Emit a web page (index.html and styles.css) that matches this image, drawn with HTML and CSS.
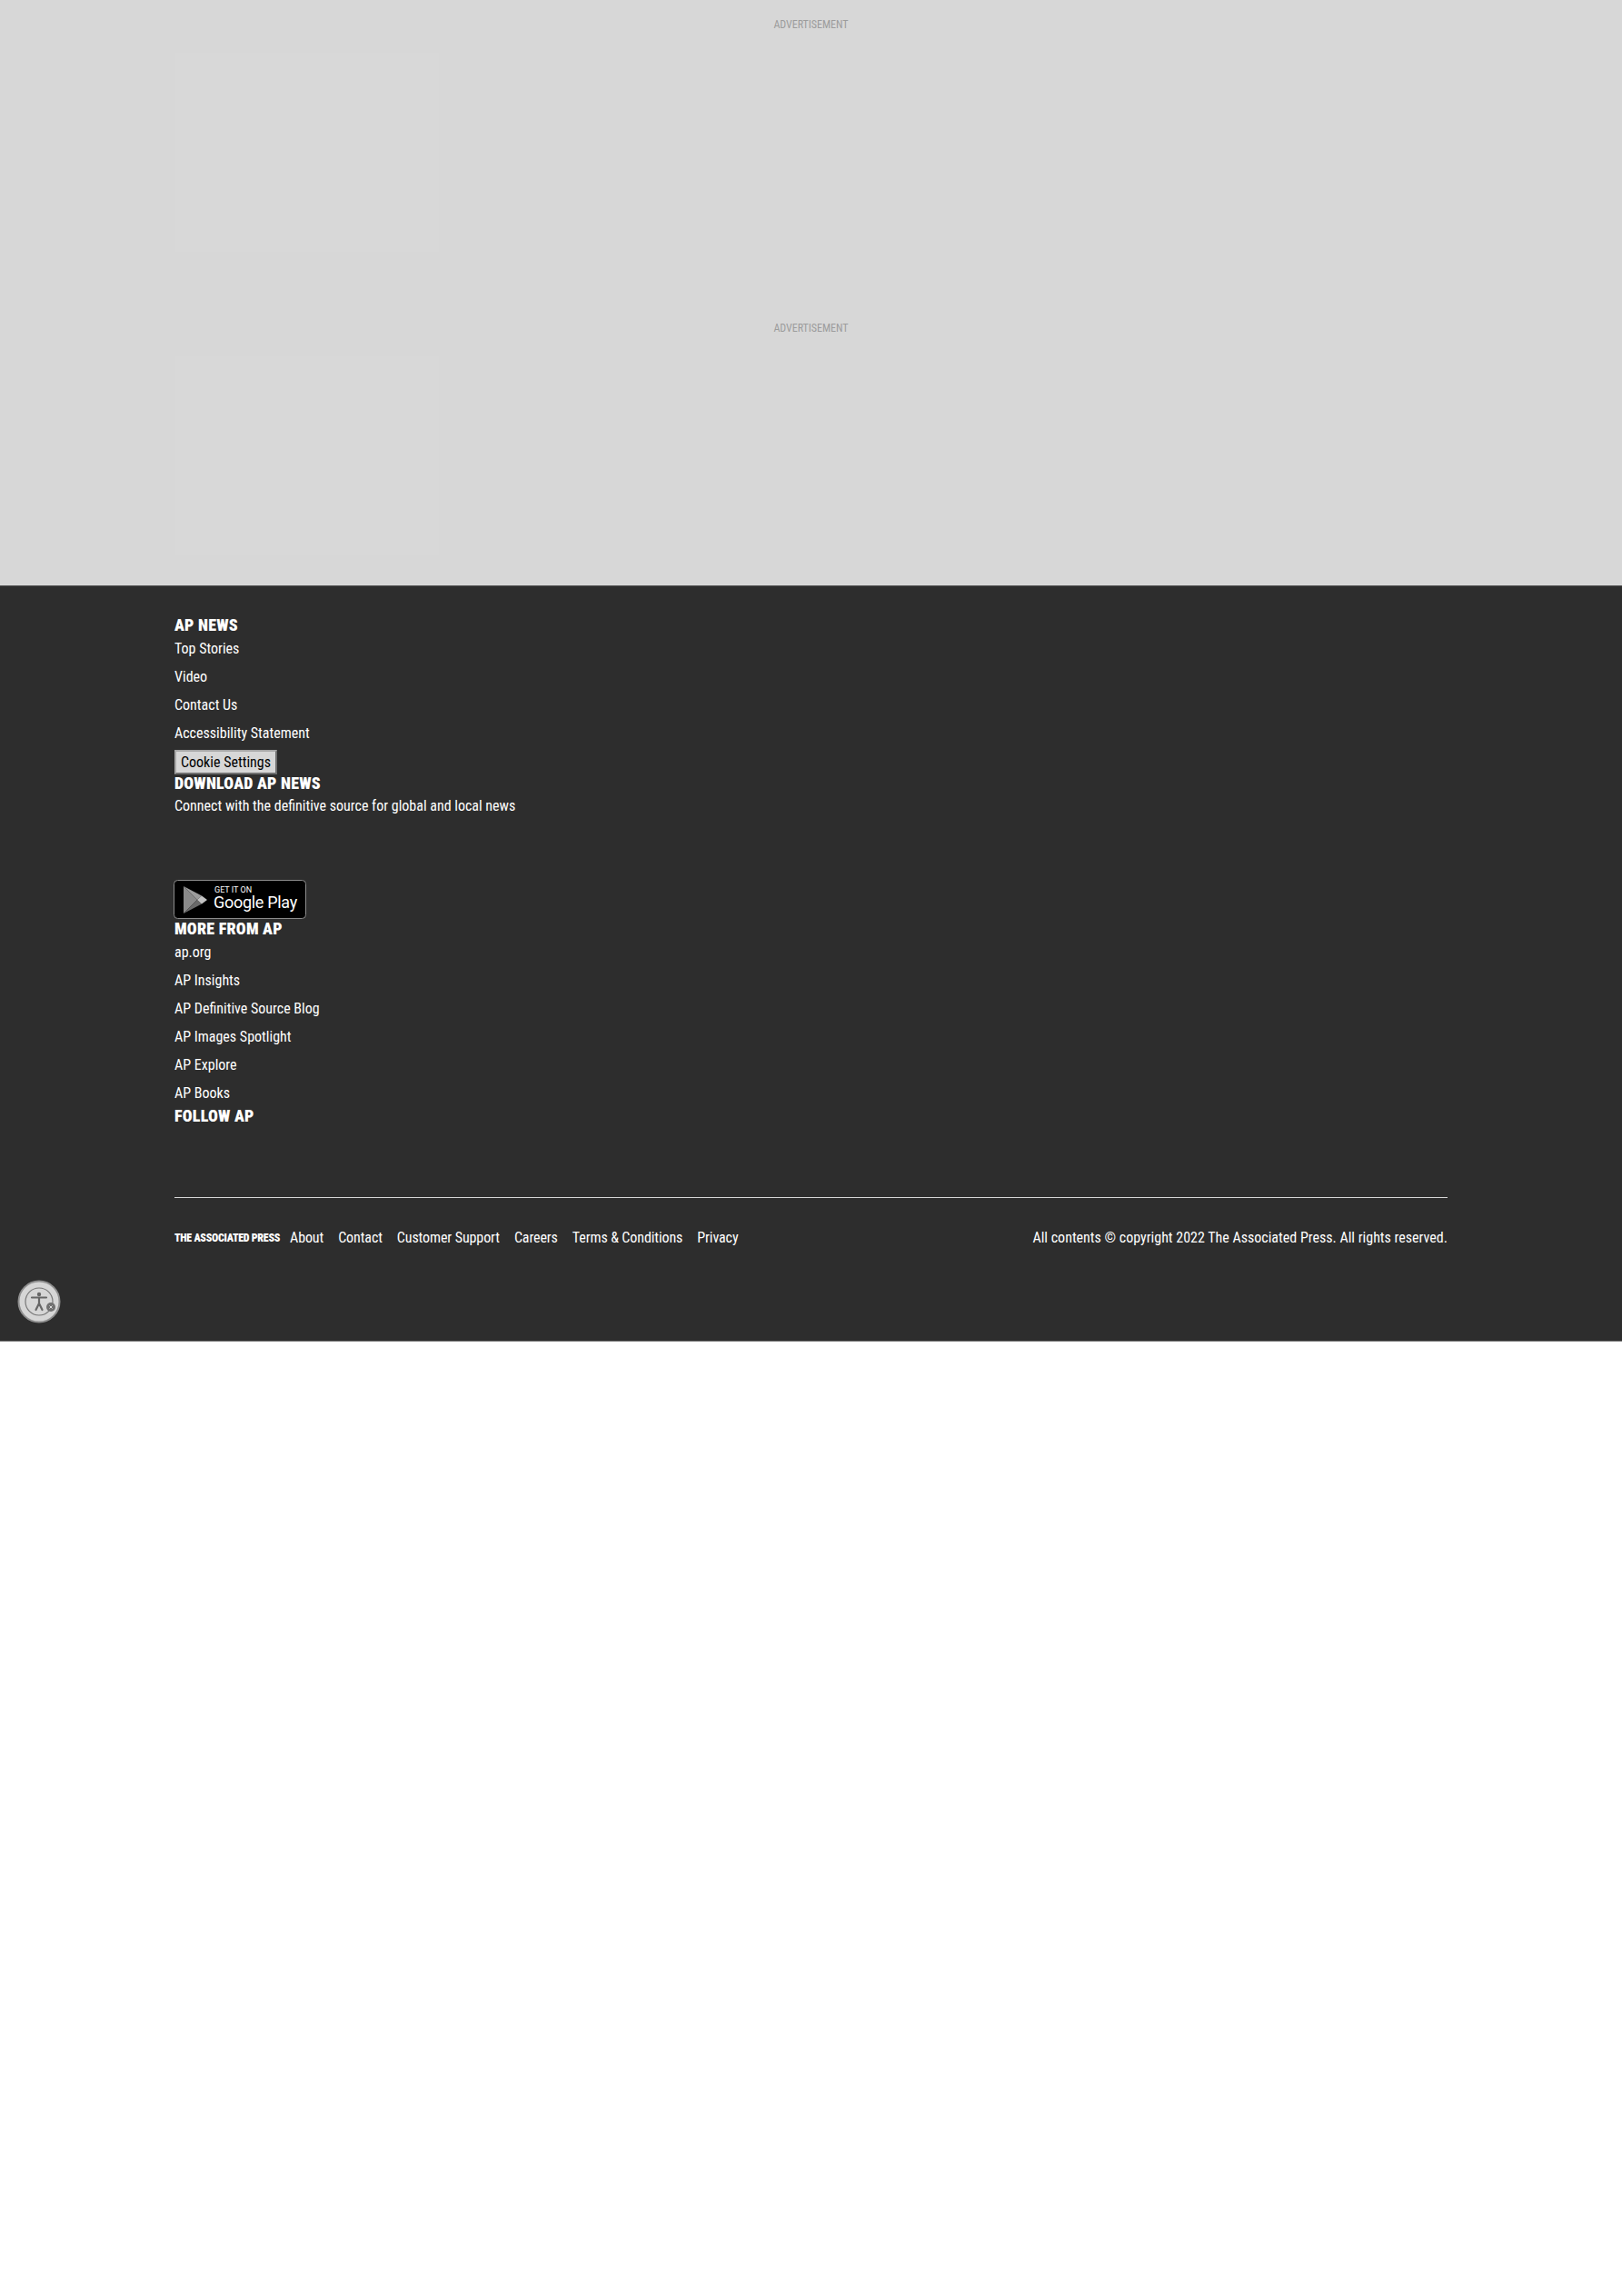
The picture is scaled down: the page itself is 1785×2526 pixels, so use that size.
FILE: index.html
```html
<!DOCTYPE html>
<html lang="en">
<head>
  <meta charset="UTF-8" />
  <title>AP News</title>
  <link rel="stylesheet" href="styles.css">
</head>
<body>
  <main class="ads">
    <section class="ad">
      <p class="ad-label">ADVERTISEMENT</p>
      <div class="ad-box"></div>
    </section>
    <section class="ad">
      <p class="ad-label">ADVERTISEMENT</p>
      <div class="ad-box"></div>
    </section>
  </main>

  <footer class="footer">
    <div class="footer-inner">
      <h4 class="footer-title">AP NEWS</h4>
      <ul class="footer-links">
        <li><a href="#">Top Stories</a></li>
        <li><a href="#">Video</a></li>
        <li><a href="#">Contact Us</a></li>
        <li><a href="#">Accessibility Statement</a></li>
      </ul>
      <button type="button" class="cookie-btn">Cookie Settings</button>

      <h4 class="footer-title">DOWNLOAD AP NEWS</h4>
      <p class="download-text">Connect with the definitive source for global and local news</p>
      <a href="#" class="play-badge">
        <svg width="146" height="43" viewBox="0 0 146 43">
          <rect x="0.5" y="0.5" width="145" height="42" rx="4" fill="#000" stroke="#8c8c8c"/>
          <path d="M11 7 L11 37 L26 22 Z" fill="#8a8a8a"/>
          <path d="M11 7 L26 22 L31 17.5 Z" fill="#9c9c9c"/>
          <path d="M11 37 L26 22 L31 26.5 Z" fill="#6a6a6a"/>
          <path d="M31 17.5 L26 22 L31 26.5 L37 22 Z" fill="#c4c4c4"/>
          <text x="45" y="14" class="play-small">GET IT ON</text>
          <text x="44" y="31" class="play-big">Google Play</text>
        </svg>
      </a>

      <h4 class="footer-title">MORE FROM AP</h4>
      <ul class="footer-links">
        <li><a href="#">ap.org</a></li>
        <li><a href="#">AP Insights</a></li>
        <li><a href="#">AP Definitive Source Blog</a></li>
        <li><a href="#">AP Images Spotlight</a></li>
        <li><a href="#">AP Explore</a></li>
        <li><a href="#">AP Books</a></li>
      </ul>
      <h4 class="footer-title">FOLLOW AP</h4>

      <div class="footer-bottom">
        <nav class="bottom-nav">
          <span class="ap-name">THE ASSOCIATED PRESS</span>
          <a href="#">About</a>
          <a href="#">Contact</a>
          <a href="#">Customer Support</a>
          <a href="#">Careers</a>
          <a href="#">Terms &amp; Conditions</a>
          <a href="#">Privacy</a>
        </nav>
        <p class="copyright">All contents © copyright 2022 The Associated Press. All rights reserved.</p>
      </div>
    </div>
  </footer>

  <button type="button" class="a11y-btn" aria-label="Accessibility">
    <svg width="48" height="48" viewBox="0 0 48 48">
      <circle cx="24" cy="24" r="22.5" fill="#d6d6d6" stroke="#8f8f8f" stroke-width="2"/>
      <circle cx="24" cy="24" r="15" fill="none" stroke="#777" stroke-width="1.2"/>
      <circle cx="24" cy="16" r="2.2" fill="#666"/>
      <path d="M16 19.5 L32 19.5 M24 19.5 L24 26 M24 26 L20.5 33 M24 26 L27.5 33" fill="none" stroke="#666" stroke-width="2.2" stroke-linecap="round"/>
      <circle cx="37" cy="30" r="5" fill="#707070"/>
      <path d="M35.5 28.5 L38.5 31.5 M38.5 28.5 L35.5 31.5" stroke="#ddd" stroke-width="1"/>
    </svg>
  </button>
</body>
</html>
```

FILE: styles.css
```css
body {
  margin: 0;
  background-color: #ffffff;
  font-family: Roboto, "Liberation Sans", sans-serif;
  font-stretch: 85%;
  position: relative;
}

.ads {
  background-color: #d7d7d7;
  height: 644px;
  overflow: hidden;
}

.ad {
  padding: 20px 0 57px;
}

.ad-label {
  margin: 0;
  text-align: center;
  font-size: 12px;
  line-height: 14px;
  color: #9c9c9c;
}

.ad-box {
  width: 290px;
  height: 219px;
  margin: 24px 0 0 193px;
  background-color: #d8d8d8;
}

.footer {
  background-color: #2d2d2d;
  color: #ffffff;
  border-top: 1px solid #555555;
  border-bottom: 1px solid #777777;
  height: 832px;
  box-sizing: border-box;
  padding: 33px 192px 0;
}

.footer-title {
  margin: 0;
  font-size: 18px;
  line-height: 20px;
  font-weight: 900;
  letter-spacing: 0.2px;
}

.footer-links {
  list-style: none;
  margin: 0;
  padding: 0;
}

.footer-links li {
  height: 31px;
  line-height: 31px;
  font-size: 16px;
}

.footer-links a,
.bottom-nav a {
  color: #ffffff;
  text-decoration: none;
}

.cookie-btn {
  display: block;
  width: 113px;
  height: 27px;
  margin-top: 3px;
  padding: 0;
  background-color: #d7d7d7;
  border: 2px solid;
  border-color: #a8a8a8 #707070 #707070 #a8a8a8;
  font-family: inherit;
  font-stretch: inherit;
  font-size: 16px;
  white-space: nowrap;
  color: #000000;
}

.download-text {
  margin: 5px 0 0;
  font-size: 16px;
  line-height: 20px;
}

.play-badge {
  display: block;
  width: 146px;
  height: 44px;
  margin: 71px 0 0 -1px;
}

.play-badge svg {
  display: block;
}

.play-small {
  font-size: 9px;
  font-stretch: 100%;
  fill: #ffffff;
}

.play-big {
  font-size: 18px;
  font-stretch: 100%;
  letter-spacing: -0.3px;
  fill: #ffffff;
}

.footer-bottom {
  display: flex;
  justify-content: space-between;
  align-items: center;
  margin-top: 79px;
  padding-top: 34px;
  border-top: 1px solid #d7d7d7;
  font-size: 16px;
  line-height: 20px;
}

.bottom-nav {
  display: flex;
  align-items: center;
  gap: 16px;
}

.bottom-nav a {
  letter-spacing: -0.1px;
}

.ap-name {
  width: 115px;
  white-space: nowrap;
  font-size: 12px;
  font-weight: 900;
  font-stretch: 75%;
  letter-spacing: -0.3px;
  margin-right: -4px;
}

.copyright {
  margin: 0;
}

.a11y-btn {
  position: absolute;
  left: 19px;
  top: 1408px;
  width: 48px;
  height: 48px;
  padding: 0;
  border: none;
  background: none;
}
```
